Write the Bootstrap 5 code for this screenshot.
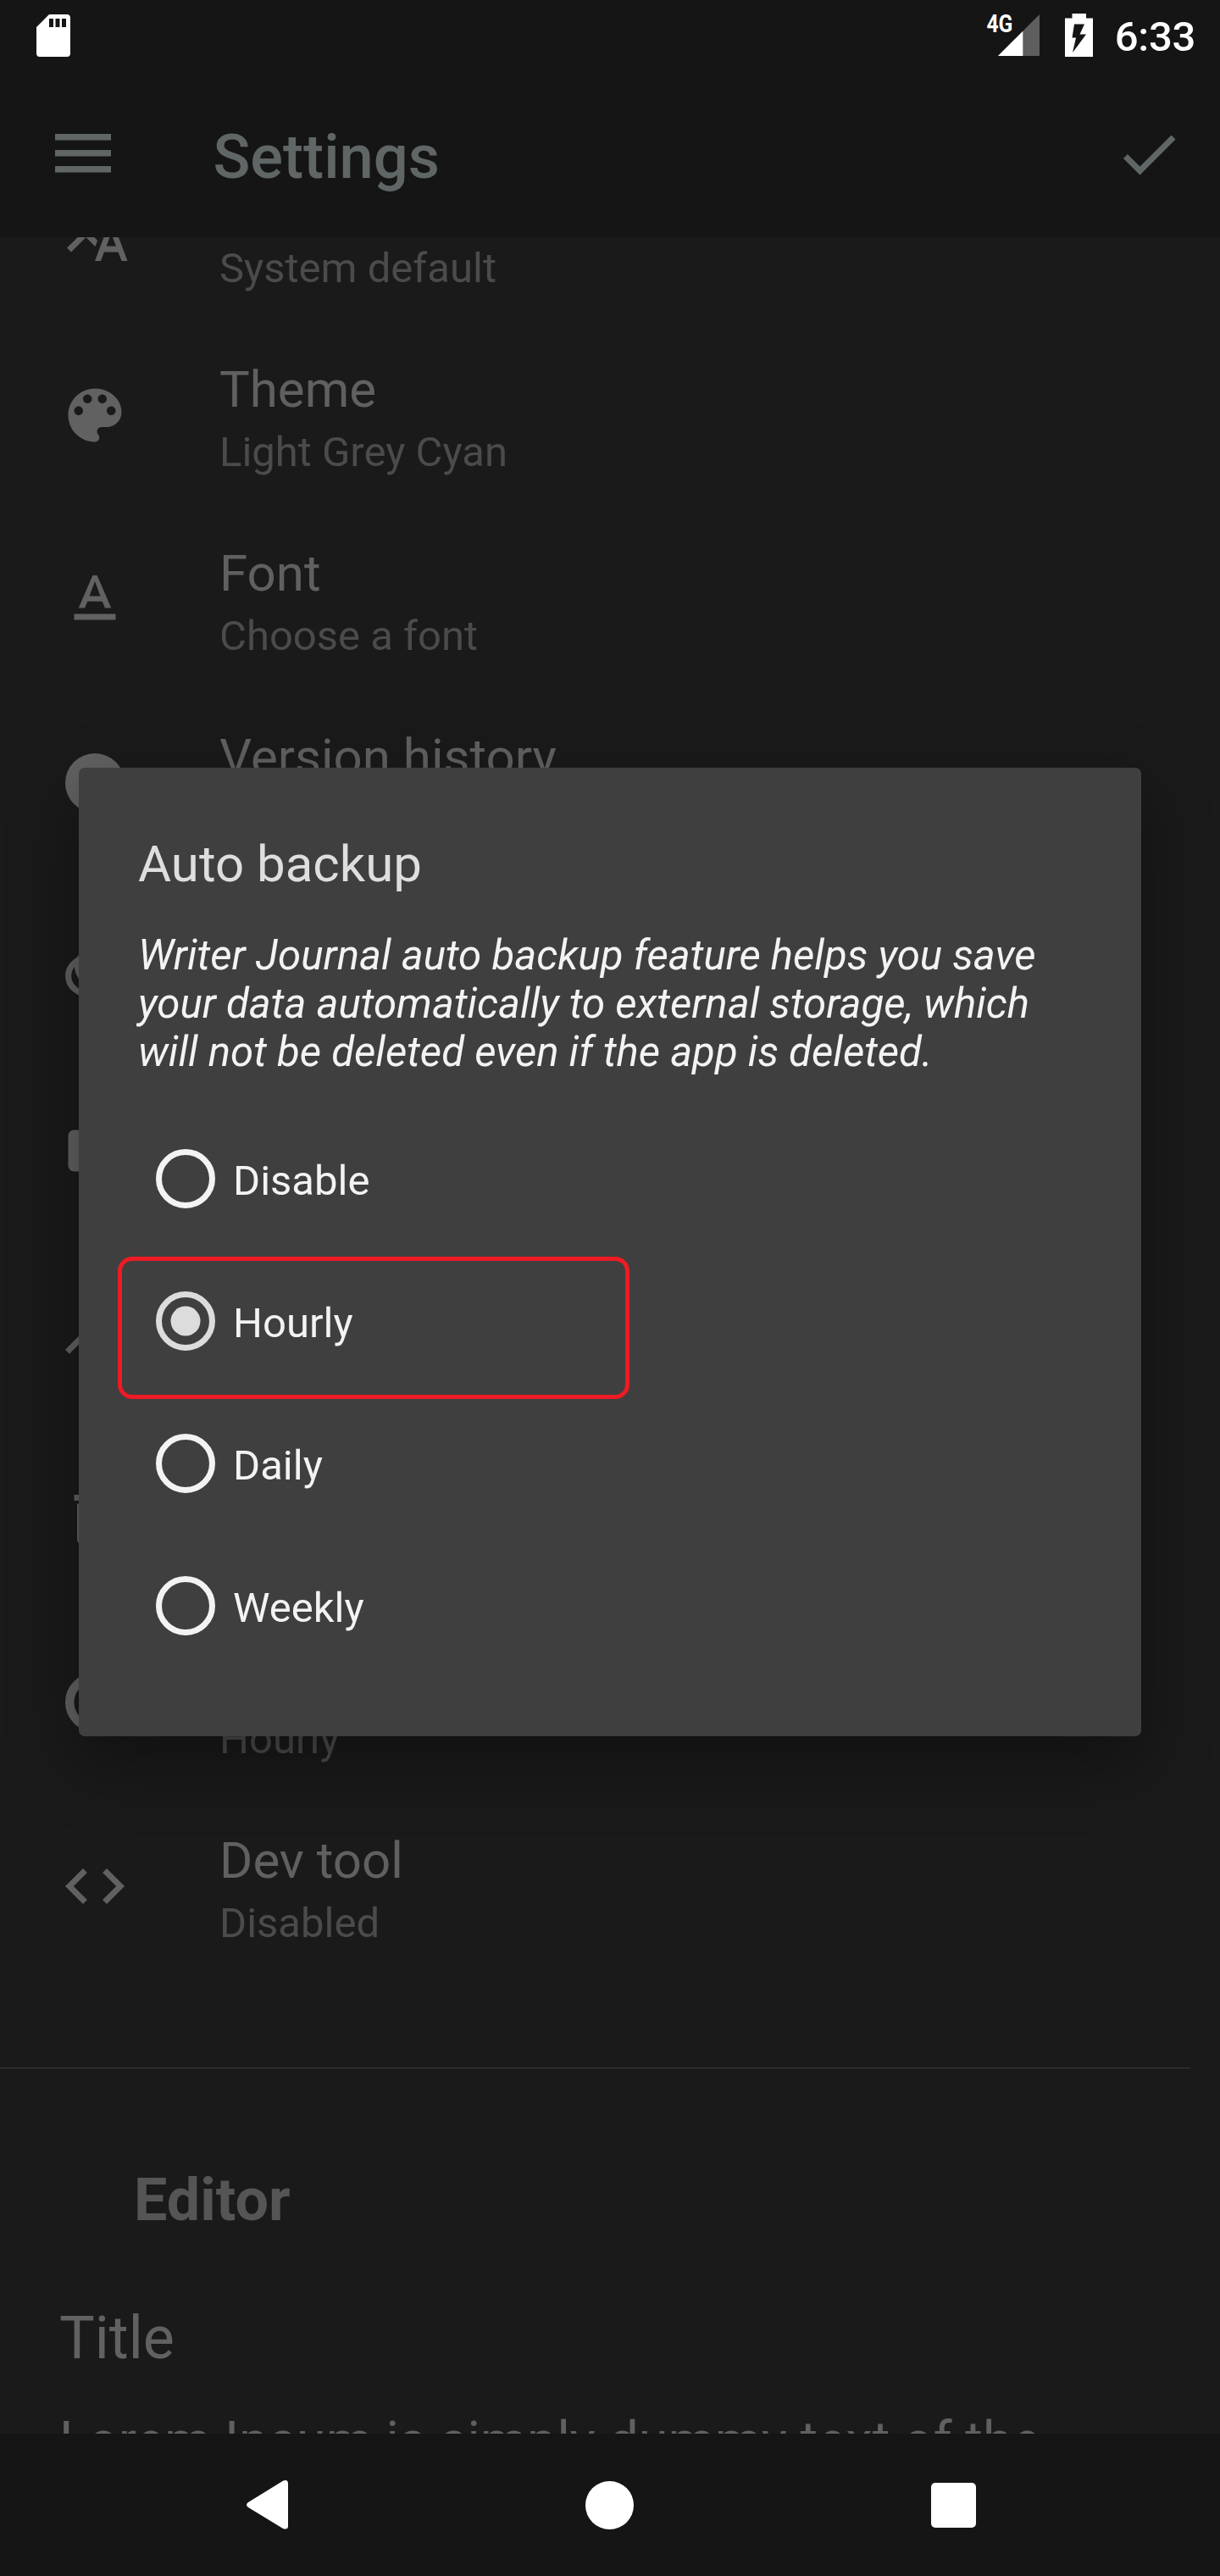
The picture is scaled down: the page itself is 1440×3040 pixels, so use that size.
<!DOCTYPE html>
<html lang="en">
<head>
<meta charset="utf-8">
<meta name="viewport" content="width=device-width, initial-scale=1">
<title>Settings</title>
<link href="https://cdn.jsdelivr.net/npm/bootstrap@5.3.0/dist/css/bootstrap.min.css" rel="stylesheet">
<style>
body{font-family:Roboto,"Noto Sans",sans-serif;background:#1a1a1a;width:1440px;height:3040px;overflow:hidden;margin:0}
svg{display:block;flex:none}
.screen{height:3040px}
.top-area{background:#151515;height:280px;flex:none}
.status{height:84px;color:#fff;padding:0 29px 0 33px}
.net-label{font-size:29px;font-weight:700;line-height:29px;transform:scaleX(.85);transform-origin:right;margin:-27px -18px 0 0}
.clock-txt{font-size:49px;font-weight:500;line-height:50px;letter-spacing:-.3px;margin-left:20px;padding-top:3px}
.app-bar{height:196px;padding:0 42px 0 65px;color:#5f6665}
.menu-icon{margin-bottom:2px}
.app-title{font-size:72.3px;font-weight:500;line-height:82px;margin-left:120.5px;padding-top:7px}
.content-area{overflow:hidden;background:#1a1a1a}
.settings-rows{margin-top:-115.5px}
.setting{height:217px;padding-left:70px;color:#616161;flex:none}
.setting-text{margin-left:105px;padding-top:6px}
.s-title{font-size:60px;line-height:70px;color:#606060;white-space:nowrap}
.s-sub{font-size:49px;line-height:57px;color:#4b4b4b;margin-top:10px}
.rule{width:1405px;height:1px;background:#3a3a3a;margin-top:105px}
.section-head{font-size:70px;font-weight:700;line-height:82px;color:#555;padding:114px 0 0 158px}
.pref-title{font-size:70px;line-height:82px;color:#616161;padding:81px 0 0 70px}
.pref-body{font-size:63px;line-height:74px;color:#606060;padding:44px 0 0 70px;white-space:nowrap}
.nav-area{height:168px;background:#151515;flex:none;padding:0 288px 0 291px}
.dialog-box{left:93px;top:906px;width:1254px;height:1143px;background:#3f3f3f;border-radius:7px;box-shadow:0 30px 80px rgba(0,0,0,.35);padding:79px 70px 0}
.d-title{font-size:60px;line-height:70px;color:#dedede}
.d-text{font-size:49.2px;line-height:57px;color:#f3f3f3;font-style:italic;white-space:nowrap;margin-top:44px}
.choices{margin-top:44px}
.choice{height:168px;font-size:49px;line-height:57px;color:#f3f3f3;gap:21px;padding:0 0 14px 21px}
.choice .lbl{padding-top:4px}
.outline-mark{left:139px;top:1483px;width:604px;height:168px;border:5px solid #ee1b24;border-radius:17px}
</style>
</head>
<body>
<div class="screen d-flex flex-column position-relative">
  <header class="top-area">
    <div class="status d-flex align-items-center">
      <svg width="60" height="60" viewBox="0 0 24 24" fill="#fff"><path d="M18.500 2H10L4 8v12.500c0 .9.6 1.500 1.500 1.500h13c.9 0 1.500-.6 1.500-1.500v-17c0-.9-.6-1.500-1.500-1.500zM12 8h-2V4h2v4zm3 0h-2V4h2v4zm3 0h-2V4h2v4z"/></svg>
      <div class="d-flex align-items-center ms-auto">
        <div class="net-label">4G</div>
        <svg width="49" height="50" viewBox="0 0 49 50"><path d="M49 0V49H0z" fill="#5e5e5e"/><path d="M29.300 19.700V49H0z" fill="#fff"/></svg>
        <svg class="ms-4" width="45" height="52" viewBox="-6 0 45 52"><path d="M0 5.500H8.500V0H25v5.500h8V51H0z" fill="#fff"/><path d="M11 12.500H23L17.500 24.500H25L9 46l4-17.500H8.500z" fill="#151515"/></svg>
        <div class="clock-txt">6:33</div>
      </div>
    </div>
    <nav class="app-bar d-flex align-items-center">
      <svg class="menu-icon" width="66" height="46" viewBox="0 0 66 46" fill="currentColor"><path d="M0 0h66v7.500H0zM0 19h66v7.500H0zM0 38h66v7.500H0z"/></svg>
      <div class="app-title">Settings</div>
      <svg class="ms-auto" width="84" height="84" viewBox="0 0 24 24" fill="currentColor"><path d="M9 16.170L4.830 12l-1.420 1.410L9 19 21 7l-1.410-1.410z"/></svg>
    </nav>
  </header>

  <main class="content-area flex-grow-1">
    <div class="settings-rows d-flex flex-column">
      <div class="setting d-flex align-items-center">
        <svg width="84" height="84" viewBox="0 0 24 24" fill="currentColor"><path d="M12.870 15.070l-2.540-2.510.03-.03c1.740-1.940 2.980-4.170 3.710-6.530H17V4h-7V2H8v2H1v1.990h11.170C11.500 7.920 10.440 9.750 9 11.350 8.070 10.320 7.300 9.190 6.690 8h-2c.73 1.630 1.730 3.170 2.980 4.560l-5.090 5.020L4 19l5-5 3.110 3.110.76-2.040zM18.500 10h-2L12 22h2l1.120-3h4.750L21 22h2l-4.500-12zm-2.620 7l1.620-4.330L19.120 17h-3.240z"/></svg>
        <div class="setting-text"><div class="s-title">&nbsp;</div><div class="s-sub">System default</div></div>
      </div>
      <div class="setting d-flex align-items-center">
        <svg width="84" height="84" viewBox="0 0 24 24" fill="currentColor"><path d="M12 3c-4.970 0-9 4.030-9 9s4.030 9 9 9c.83 0 1.500-.67 1.500-1.500 0-.39-.15-.74-.39-1.010-.23-.26-.38-.61-.38-.99 0-.83.67-1.500 1.500-1.500H16c2.760 0 5-2.240 5-5 0-4.420-4.030-8-9-8zm-5.500 9c-.83 0-1.500-.67-1.500-1.500S5.670 9 6.500 9 8 9.670 8 10.500 7.330 12 6.500 12zm3-4C8.670 8 8 7.330 8 6.500S8.670 5 9.500 5s1.500.67 1.500 1.500S10.330 8 9.500 8zm5 0c-.83 0-1.500-.67-1.500-1.500S13.670 5 14.500 5s1.500.67 1.500 1.500S15.330 8 14.500 8zm3 4c-.83 0-1.500-.67-1.500-1.500S16.670 9 17.500 9s1.500.67 1.500 1.500-.67 1.500-1.500 1.500z"/></svg>
        <div class="setting-text"><div class="s-title">Theme</div><div class="s-sub">Light Grey Cyan</div></div>
      </div>
      <div class="setting d-flex align-items-center">
        <svg width="84" height="84" viewBox="0 0 24 24" fill="currentColor"><path d="M5 17v2h14v-2H5zm4.500-4.200h5l.9 2.200h2.100L12.750 4h-1.500L6.500 15h2.100l.9-2.200zM12 5.980L13.870 11h-3.740L12 5.980z"/></svg>
        <div class="setting-text"><div class="s-title">Font</div><div class="s-sub">Choose a font</div></div>
      </div>
      <div class="setting d-flex align-items-center">
        <svg width="84" height="84" viewBox="0 0 24 24" fill="currentColor"><circle cx="12" cy="12" r="10"/></svg>
        <div class="setting-text"><div class="s-title">Version history</div><div class="s-sub">&nbsp;</div></div>
      </div>
      <div class="setting d-flex align-items-center">
        <svg width="84" height="84" viewBox="0 0 24 24"><path d="M7 9.400C1.700 12 1.700 18 7 20.700" fill="none" stroke="currentColor" stroke-width="2"/><path d="M7 7.300L5.300 9.700 5.100 12.300 5.600 14.300 7 17z" fill="currentColor"/></svg>
      </div>
      <div class="setting d-flex align-items-center">
        <svg width="84" height="84" viewBox="0 0 24 24" fill="currentColor"><rect x="3" y="5" width="18" height="14" rx="2"/></svg>
      </div>
      <div class="setting d-flex align-items-center">
        <svg width="84" height="84" viewBox="0 0 24 24" fill="none" stroke="currentColor" stroke-width="2"><path d="M2.700 17.800L9 11.500l4 4 8-9"/></svg>
      </div>
      <div class="setting d-flex align-items-center">
        <svg width="84" height="84" viewBox="0 0 24 24" fill="currentColor"><path d="M6 19c0 1.100.9 2 2 2h8c1.100 0 2-.9 2-2V7H6v12zM19 4h-3.500l-1-1h-5l-1 1H5v2h14V4z"/></svg>
      </div>
      <div class="setting d-flex align-items-center">
        <svg width="84" height="84" viewBox="0 0 24 24" fill="none" stroke="currentColor" stroke-width="3"><circle cx="12" cy="12" r="8.500"/></svg>
        <div class="setting-text"><div class="s-title">&nbsp;</div><div class="s-sub">Hourly</div></div>
      </div>
      <div class="setting d-flex align-items-center">
        <svg width="84" height="84" viewBox="0 0 24 24" fill="currentColor"><path d="M9.400 16.600L4.800 12l4.600-4.600L8 6l-6 6 6 6 1.400-1.400zm5.200 0l4.600-4.600-4.600-4.600L16 6l6 6-6 6-1.400-1.400z"/></svg>
        <div class="setting-text"><div class="s-title">Dev tool</div><div class="s-sub">Disabled</div></div>
      </div>
    </div>
    <div class="rule"></div>
    <div class="section-head">Editor</div>
    <div class="pref-title">Title</div>
    <div class="pref-body">Lorem Ipsum is simply dummy text of the</div>
  </main>

  <footer class="nav-area d-flex align-items-center justify-content-between">
    <svg width="49" height="58" viewBox="0 0 49 58" fill="#fff"><path d="M43 .700Q49-1.500 49 4V54Q49 59 43 57L2 32Q-2 29 2 26z"/></svg>
    <svg width="57" height="57" viewBox="0 0 57 57" fill="#fff"><circle cx="28.500" cy="28.500" r="28.500"/></svg>
    <svg width="53" height="53" viewBox="0 0 53 53" fill="#fff"><rect width="53" height="53" rx="5"/></svg>
  </footer>

  <section class="dialog-box position-absolute" role="dialog">
    <div class="d-title">Auto backup</div>
    <div class="d-text">Writer Journal auto backup feature helps you save<br>your data automatically to external storage, which<br>will not be deleted even if the app is deleted.</div>
    <div class="choices d-flex flex-column">
      <div class="choice d-flex align-items-center"><svg width="70" height="70" viewBox="0 0 70 70"><circle cx="35" cy="35" r="31.500" fill="none" stroke="#f3f3f3" stroke-width="7"/></svg><span class="lbl">Disable</span></div>
      <div class="choice d-flex align-items-center"><svg width="70" height="70" viewBox="0 0 70 70"><circle cx="35" cy="35" r="31.500" fill="none" stroke="#dcdcdc" stroke-width="7"/><circle cx="35" cy="35" r="17.500" fill="#dcdcdc"/></svg><span class="lbl">Hourly</span></div>
      <div class="choice d-flex align-items-center"><svg width="70" height="70" viewBox="0 0 70 70"><circle cx="35" cy="35" r="31.500" fill="none" stroke="#f3f3f3" stroke-width="7"/></svg><span class="lbl">Daily</span></div>
      <div class="choice d-flex align-items-center"><svg width="70" height="70" viewBox="0 0 70 70"><circle cx="35" cy="35" r="31.500" fill="none" stroke="#f3f3f3" stroke-width="7"/></svg><span class="lbl">Weekly</span></div>
    </div>
  </section>
  <div class="outline-mark position-absolute"></div>
</div>
<script src="https://cdn.jsdelivr.net/npm/bootstrap@5.3.0/dist/js/bootstrap.bundle.min.js"></script>
</body>
</html>
